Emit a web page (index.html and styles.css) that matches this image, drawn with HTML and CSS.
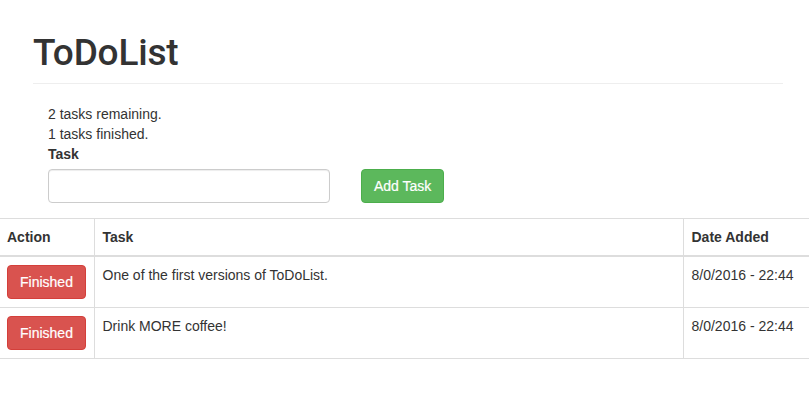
FILE: index.html
```html
<!DOCTYPE html>
<html>
<head>
<meta charset="utf-8">
<title>ToDoList</title>
<link rel="stylesheet" href="styles.css">
</head>
<body>
<div class="page-header">
  <h1>ToDoList</h1>
</div>
<div class="content">
  <div class="stat">2 tasks remaining.</div>
  <div class="stat">1 tasks finished.</div>
  <label class="label" for="task">Task</label>
  <div class="form-row">
    <input class="input" id="task" type="text">
    <button class="btn btn-success">Add Task</button>
  </div>
</div>
<table class="table">
  <colgroup>
    <col class="col-action">
    <col class="col-task">
    <col class="col-date">
  </colgroup>
  <thead>
    <tr><th>Action</th><th>Task</th><th>Date Added</th></tr>
  </thead>
  <tbody>
    <tr>
      <td><button class="btn btn-danger">Finished</button></td>
      <td>One of the first versions of ToDoList.</td>
      <td>8/0/2016 - 22:44</td>
    </tr>
    <tr>
      <td><button class="btn btn-danger">Finished</button></td>
      <td>Drink MORE coffee!</td>
      <td>8/0/2016 - 22:44</td>
    </tr>
  </tbody>
</table>
</body>
</html>
```

FILE: styles.css
```css
* { box-sizing: border-box; }
html, body { margin: 0; padding: 0; background: #fff; }
body {
  font-family: "Liberation Sans", Arial, Helvetica, sans-serif;
  font-size: 14px;
  line-height: 20px;
  color: #333;
}
.page-header {
  margin: 0 26px 0 33px;
  padding: 33px 0 10px;
  border-bottom: 1px solid #eee;
}
.page-header h1 {
  margin: 0;
  font-family: Roboto, "Liberation Sans", Arial, sans-serif;
  font-size: 37px;
  line-height: 40px;
  font-weight: 500;
  letter-spacing: -0.2px;
  color: #333;
}
.content {
  padding: 20px 0 0 48px;
}
.label {
  display: inline-block;
  font-weight: bold;
  margin-bottom: 5px;
}
.form-row {
  display: flex;
  align-items: center;
  gap: 31px;
  margin-bottom: 15px;
}
.input {
  width: 282px;
  height: 34px;
  padding: 6px 12px;
  font: inherit;
  color: #555;
  background: #fff;
  border: 1px solid #ccc;
  border-radius: 4px;
  box-shadow: inset 0 1px 1px rgba(0,0,0,.075);
}
.btn {
  display: inline-block;
  height: 34px;
  padding: 6px 12px;
  font: inherit;
  line-height: 20px;
  color: #fff;
  border: 1px solid transparent;
  border-radius: 4px;
  cursor: pointer;
  white-space: nowrap;
  -webkit-text-stroke: 0.2px #fff;
}
.btn-success { background: #5cb85c; border-color: #4cae4c; }
.btn-danger { background: #d9534f; border-color: #d43f3a; }
.table {
  width: 100%;
  border-collapse: collapse;
  table-layout: fixed;
}
.col-action { width: 94px; }
.col-date { width: 126px; }
.table th, .table td {
  padding: 8px;
  text-align: left;
  vertical-align: top;
  border: 1px solid #ddd;
}
.table th { font-weight: bold; border-bottom: 2px solid #ddd; }
.table th:first-child, .table td:first-child { border-left: 0; padding-left: 7px; }
.table th:last-child, .table td:last-child { border-right: 0; }
```
